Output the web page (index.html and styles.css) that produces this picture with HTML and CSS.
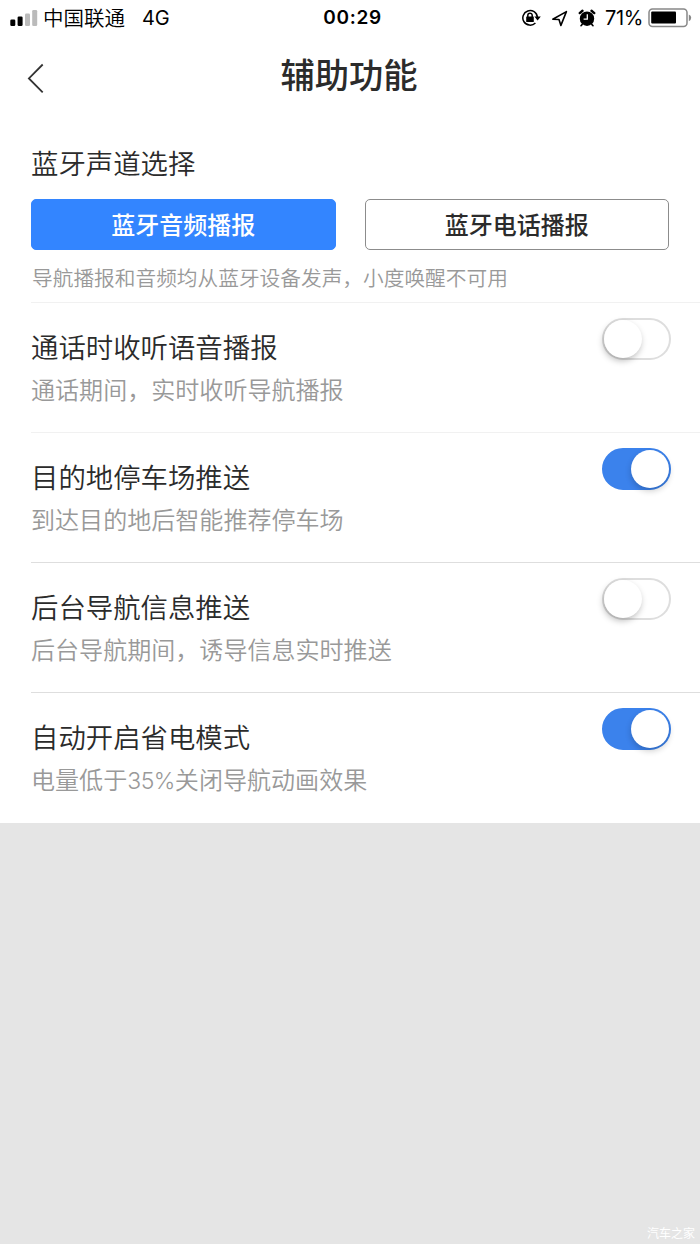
FILE: index.html
```html
<!DOCTYPE html>
<html lang="zh-CN">
<head>
<meta charset="utf-8">
<title>辅助功能</title>
<link rel="stylesheet" href="styles.css">
</head>
<body>
<div class="screen">
  <div class="status">
    <div class="status-left">
      <svg class="signal" width="28" height="18" viewBox="0 0 28 18">
        <rect x="0.3" y="10.5" width="5" height="6.5" rx="1.3"/>
        <rect x="7.6" y="7.5" width="5" height="9.5" rx="1.3"/>
        <rect class="dim" x="15" y="4.5" width="5" height="12.5" rx="1.3"/>
        <rect class="dim" x="22.2" y="1" width="5" height="16" rx="1.3"/>
      </svg>
      <span class="carrier">中国联通</span>
      <span class="network">4G</span>
    </div>
    <div class="clock">00:29</div>
    <div class="status-right">
      <svg class="lock" width="20" height="18" viewBox="0 0 20 18">
        <path class="line" d="M14.4 13.9A7.3 7.3 0 1 1 16.4 8.2"/>
        <path d="M13.4 7.6h6.4l-3.2 3.9z"/>
        <rect x="5.2" y="7.6" width="7.6" height="5.4" rx=".5"/>
        <path class="line" d="M6.8 8V6.4a2.2 2.2 0 0 1 4.4 0V8"/>
      </svg>
      <svg class="arrow" width="17" height="17" viewBox="0 0 17 17">
        <path d="M15.4 1.6 1.8 9.2l6.2.3 1.9 5.9z"/>
      </svg>
      <svg class="alarm" width="18" height="18" viewBox="0 0 18 18">
        <circle cx="9" cy="9.7" r="7.2"/>
        <path class="bell" d="M1.7 4.1 4.5 1.8M16.3 4.1 13.5 1.8"/>
        <path class="foot" d="M4.2 15.4l-1.2 1.3M13.8 15.4l1.2 1.3"/>
        <path class="hand" d="M9.3 5.3v4.9H5.6"/>
      </svg>
      <span class="percent">71%</span>
      <svg class="battery" width="44" height="20" viewBox="0 0 44 20">
        <rect class="shell" x="1" y="1" width="38" height="17.4" rx="3.5"/>
        <rect x="3.2" y="3.6" width="24.8" height="12" rx="1"/>
        <path class="cap" d="M40.8 6.4q2.4 1 2.4 3.4t-2.4 3.4z"/>
      </svg>
    </div>
  </div>
  <div class="header">
    <svg class="back" width="18" height="30" viewBox="0 0 18 30"><path d="M15.7 1.5 1.9 15.4l13.8 13.9"/></svg>
    <h1 class="title">辅助功能</h1>
  </div>
  <div class="channel">
    <h2 class="label">蓝牙声道选择</h2>
    <div class="buttons">
      <div class="button active">蓝牙音频播报</div>
      <div class="button">蓝牙电话播报</div>
    </div>
    <p class="note">导航播报和音频均从蓝牙设备发声，小度唤醒不可用</p>
  </div>
  <div class="row faint">
    <div class="text"><h2 class="label">通话时收听语音播报</h2><p class="hint">通话期间，实时收听导航播报</p></div>
    <div class="toggle"><div class="knob"></div></div>
  </div>
  <div class="row faint">
    <div class="text"><h2 class="label">目的地停车场推送</h2><p class="hint">到达目的地后智能推荐停车场</p></div>
    <div class="toggle on"><div class="knob"></div></div>
  </div>
  <div class="row">
    <div class="text"><h2 class="label">后台导航信息推送</h2><p class="hint">后台导航期间，诱导信息实时推送</p></div>
    <div class="toggle"><div class="knob"></div></div>
  </div>
  <div class="row">
    <div class="text"><h2 class="label">自动开启省电模式</h2><p class="hint">电量低于<span class="latin">35%</span>关闭导航动画效果</p></div>
    <div class="toggle on"><div class="knob"></div></div>
  </div>
  <div class="rest"><span class="mark">汽车之家</span></div>
</div>
</body>
</html>
```
FILE: styles.css
```css
* { box-sizing: border-box; margin: 0; padding: 0; }
body { font-family: "Noto Sans CJK SC", sans-serif; color: #2b2b2b; background: #fff; }
svg { display: block; flex: none; }
.screen { width: 700px; height: 1244px; display: flex; flex-direction: column; overflow: hidden; white-space: nowrap; }

.status { height: 36px; display: grid; grid-template-columns: 1fr auto 1fr; padding: 0 8px 0 10px; color: #000; line-height: 36px; }
.status-left, .status-right { display: flex; align-items: center; }
.status-right { justify-content: flex-end; }
.signal { margin-bottom: 1px; }
.signal .dim { fill: #bbb; }
.carrier { font-size: 20.5px; font-weight: 350; line-height: 34px; margin: 0 0 2px 5px; }
.network { font: 20px/36px Inter, sans-serif; margin-left: 17px; letter-spacing: -.1px; }
.clock { font: 600 19px/36px Inter, sans-serif; letter-spacing: .7px; padding-left: 3px; }
.lock .line { fill: none; stroke: #000; stroke-width: 1.5; }
.arrow { margin-left: 10px; }
.arrow path { fill: none; stroke: #000; stroke-width: 1.6; stroke-linejoin: round; }
.alarm { margin-left: 10px; }
.alarm .bell { stroke: #000; stroke-width: 2.4; stroke-linecap: round; }
.alarm .foot { stroke: #000; stroke-width: 1.6; stroke-linecap: round; }
.alarm .hand { fill: none; stroke: #fff; stroke-width: 1.3; }
.percent { font: 20px/36px Inter, sans-serif; letter-spacing: -.4px; margin-left: 9px; }
.battery { margin-left: 5px; }
.battery .shell { fill: none; stroke: #888; stroke-width: 1.5; }
.battery .cap { fill: #888; }

.header { height: 86px; display: grid; grid-template-columns: 71px 1fr 73px; padding-top: 11px; }
.back { margin: 16px 0 0 27px; }
.back path { fill: none; stroke: #333; stroke-width: 1.8; }
.title { font-size: 34.3px; font-weight: 500; line-height: 52px; text-align: center; }

.channel { height: 180px; padding: 20px 31px 0; }
.label { font-size: 27.4px; font-weight: 350; line-height: 40px; }
.buttons { display: grid; grid-template-columns: 1fr 1fr; gap: 29px; margin-top: 17px; }
.button { height: 51px; border: 1px solid #8c8c8c; border-radius: 5px; font-size: 24px; font-weight: 500; line-height: 47px; text-align: center; }
.button.active { border-color: #3385ff; background: #3385ff; color: #fff; }
.note { margin: 11px 0 0 1px; font-size: 20.7px; font-weight: 350; line-height: 32px; color: #999; }

.row { height: 130px; margin-left: 31px; padding: 15px 29px 0 0; border-top: 1px solid #dedede; display: flex; justify-content: space-between; align-items: flex-start; }
.row.faint { border-top-color: #f1f1f1; }
.text { padding-top: 8px; }
.hint { font-size: 24.05px; font-weight: 350; line-height: 36px; color: #999; margin-top: 5px; }
.latin { font-family: Inter, sans-serif; font-size: 23px; letter-spacing: -.5px; }
.toggle { width: 69px; height: 42px; border: 2px solid #dedede; border-radius: 21px; display: flex; }
.toggle.on { border-color: #3b82ec; background: #3b82ec; justify-content: flex-end; }
.knob { width: 38px; height: 38px; border-radius: 50%; background: #fff; box-shadow: -1px 3px 6px rgba(0,0,0,.25); }
.toggle.on .knob { box-shadow: 0 3px 6px rgba(0,0,0,.2); }

.rest { flex: 1; margin-top: 1px; background: #e5e5e5; display: flex; justify-content: flex-end; align-items: flex-end; padding: 0 5px 2px 0; }
.mark { font-size: 12px; line-height: 18px; color: #fff; }
```
